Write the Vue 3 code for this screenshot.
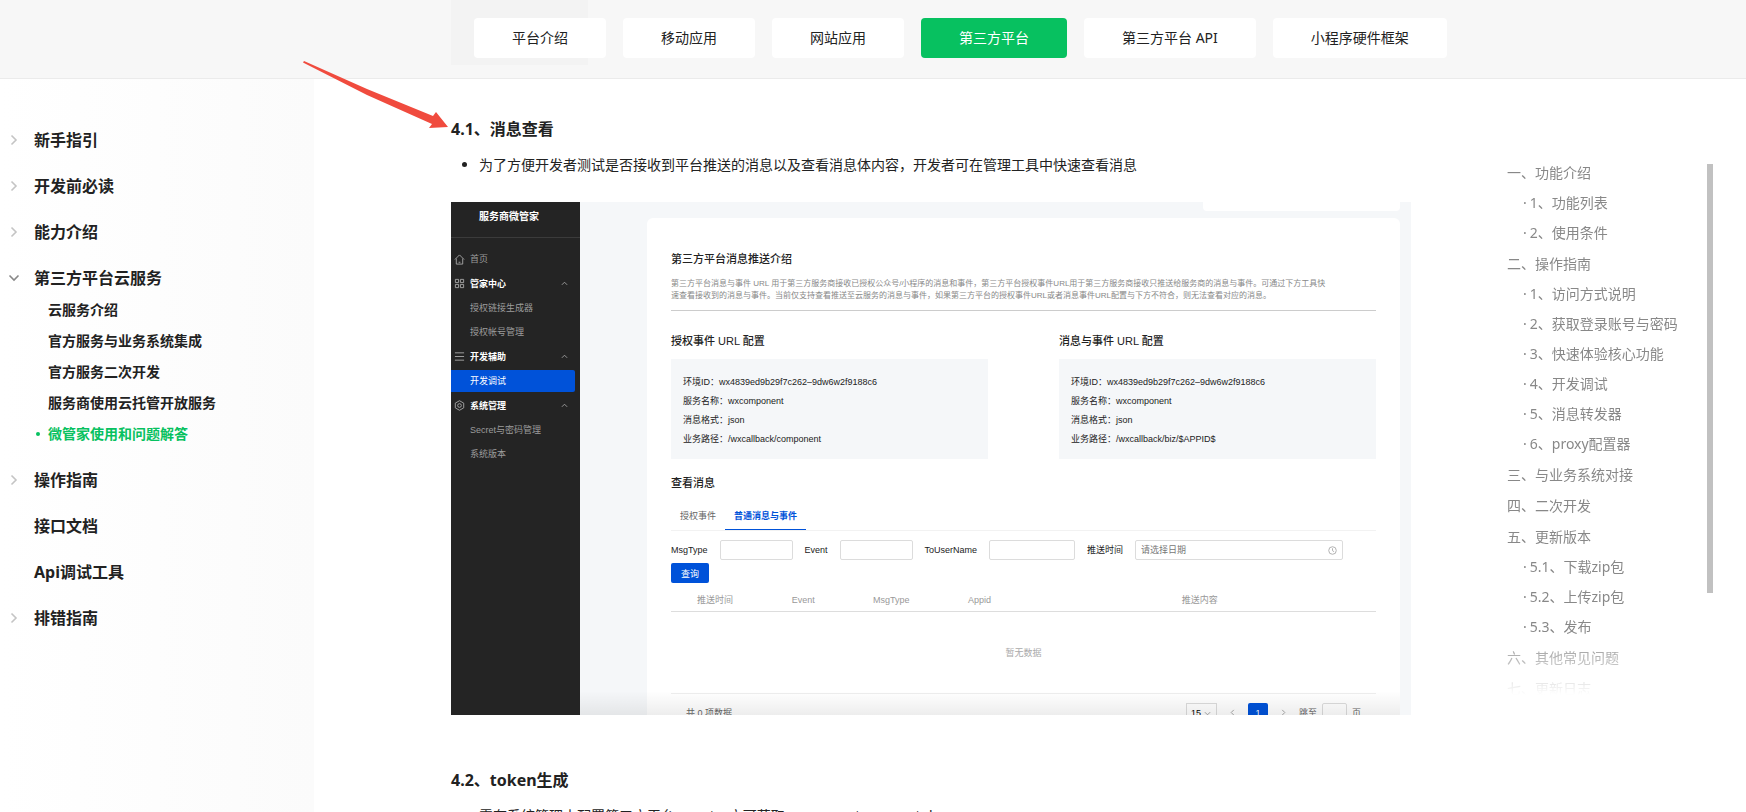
<script setup>
import { ref } from "vue";

const tabs = [
  "平台介绍",
  "移动应用",
  "网站应用",
  "第三方平台",
  "第三方平台 API",
  "小程序硬件框架",
];
const activeTab = ref("第三方平台");

const menu = [
  { title: "新手指引", arrow: true },
  { title: "开发前必读", arrow: true },
  { title: "能力介绍", arrow: true },
  {
    title: "第三方平台云服务",
    arrow: true,
    open: true,
    children: [
      "云服务介绍",
      "官方服务与业务系统集成",
      "官方服务二次开发",
      "服务商使用云托管开放服务",
      "微管家使用和问题解答",
    ],
  },
  { title: "操作指南", arrow: true },
  { title: "接口文档" },
  { title: "Api调试工具" },
  { title: "排错指南", arrow: true },
];
const activeMenu = ref("微管家使用和问题解答");

const toc = [
  { text: "一、功能介绍" },
  { text: "1、功能列表", sub: true },
  { text: "2、使用条件", sub: true },
  { text: "二、操作指南" },
  { text: "1、访问方式说明", sub: true },
  { text: "2、获取登录账号与密码", sub: true },
  { text: "3、快速体验核心功能", sub: true },
  { text: "4、开发调试", sub: true },
  { text: "5、消息转发器", sub: true },
  { text: "6、proxy配置器", sub: true },
  { text: "三、与业务系统对接" },
  { text: "四、二次开发" },
  { text: "五、更新版本" },
  { text: "5.1、下载zip包", sub: true },
  { text: "5.2、上传zip包", sub: true },
  { text: "5.3、发布", sub: true },
  { text: "六、其他常见问题" },
  { text: "七、更新日志" },
];

// admin console shown inside the article
const consoleMenu = [
  { text: "首页", icon: "home" },
  { text: "管家中心", icon: "grid", group: true },
  { text: "授权链接生成器" },
  { text: "授权帐号管理" },
  { text: "开发辅助", icon: "list", group: true },
  { text: "开发调试", active: true },
  { text: "系统管理", icon: "gear", group: true },
  { text: "Secret与密码管理" },
  { text: "系统版本" },
];

const configs = [
  {
    title: "授权事件 URL 配置",
    path: "/wxcallback/component",
  },
  {
    title: "消息与事件 URL 配置",
    path: "/wxcallback/biz/$APPID$",
  },
];

const filters = [
  { id: "msg-type", label: "MsgType" },
  { id: "event", label: "Event" },
  { id: "to-user", label: "ToUserName", wide: true },
];
</script>

<template>
  <div class="page">
    <header class="header">
      <div class="ghost"></div>
      <nav class="tabs">
        <a
          v-for="tab in tabs"
          :key="tab"
          href="#"
          class="tab"
          :class="{ active: tab === activeTab }"
          @click.prevent="activeTab = tab"
          >{{ tab }}</a
        >
      </nav>
    </header>

    <div class="body">
      <aside class="sidebar">
        <ul>
          <li v-for="item in menu" :key="item.title" class="menu-item">
            <a href="#" class="menu-title" @click.prevent>
              <svg
                class="chevron"
                :class="{ open: item.open }"
                viewBox="0 0 12 12"
                width="12"
                height="12"
              >
                <path v-if="item.arrow && !item.open" d="M3.5 1.5L8 6L3.5 10.5" />
                <path v-if="item.open" d="M1.5 3.5L6 8L10.5 3.5" />
              </svg>
              {{ item.title }}
            </a>
            <ul v-if="item.children" class="submenu">
              <li v-for="child in item.children" :key="child">
                <a
                  href="#"
                  :class="{ active: child === activeMenu }"
                  @click.prevent="activeMenu = child"
                  >{{ child }}</a
                >
              </li>
            </ul>
          </li>
        </ul>
      </aside>

      <main class="article">
        <h3>4.1、消息查看</h3>
        <ul class="bullets">
          <li>
            为了方便开发者测试是否接收到平台推送的消息以及查看消息体内容，开发者可在管理工具中快速查看消息
          </li>
        </ul>

        <section class="console">
          <div class="console-side">
            <div class="console-brand">服务商微管家</div>
            <ul>
              <li
                v-for="item in consoleMenu"
                :key="item.text"
                class="console-item"
                :class="{ group: item.group, active: item.active }"
              >
                <svg class="console-icon" viewBox="0 0 12 12" width="11" height="11">
                  <path
                    v-if="item.icon === 'home'"
                    d="M1 6L6 1L11 6M2.5 5V11H9.5V5M5 9H7"
                  />
                  <path
                    v-if="item.icon === 'grid'"
                    d="M1.5 1.5H5V5H1.5ZM7 1.5H10.5V5H7ZM1.5 7H5V10.5H1.5ZM7 7H10.5V10.5H7Z"
                  />
                  <path v-if="item.icon === 'list'" d="M1 2H11M1 6H11M1 10H11" />
                  <g v-if="item.icon === 'gear'">
                    <path d="M6 0.8L10.6 3.4V8.6L6 11.2L1.4 8.6V3.4Z" />
                    <circle cx="6" cy="6" r="2" />
                  </g>
                </svg>
                <span>{{ item.text }}</span>
                <svg
                  v-if="item.group"
                  class="console-caret"
                  viewBox="0 0 8 8"
                  width="7"
                  height="7"
                >
                  <path d="M1 5.5L4 2.5L7 5.5" />
                </svg>
              </li>
            </ul>
          </div>

          <div class="console-main">
            <div class="floating-bar"></div>
            <div class="card">
              <h4>第三方平台消息推送介绍</h4>
              <p class="intro">
                第三方平台消息与事件 URL
                用于第三方服务商接收已授权公众号/小程序的消息和事件，第三方平台授权事件URL用于第三方服务商接收只推送给服务商的消息与事件。可通过下方工具快<br />
                速查看接收到的消息与事件。当前仅支持查看推送至云服务的消息与事件，如果第三方平台的授权事件URL或者消息事件URL配置与下方不符合，则无法查看对应的消息。
              </p>

              <div class="configs">
                <div v-for="config in configs" :key="config.title" class="config">
                  <h4>{{ config.title }}</h4>
                  <div class="config-box">
                    <p>环境ID：wx4839ed9b29f7c262–9dw6w2f9188c6</p>
                    <p>服务名称：wxcomponent</p>
                    <p>消息格式：json</p>
                    <p>业务路径：{{ config.path }}</p>
                  </div>
                </div>
              </div>

              <h4>查看消息</h4>
              <div class="console-tabs">
                <button type="button">授权事件</button>
                <button type="button" class="active">普通消息与事件</button>
              </div>

              <form class="filters" @submit.prevent>
                <div v-for="filter in filters" :key="filter.id" class="field">
                  <label :for="filter.id">{{ filter.label }}</label>
                  <input :id="filter.id" type="text" :class="{ wide: filter.wide }" />
                </div>
                <div class="field">
                  <label for="push-time">推送时间</label>
                  <div class="date">
                    <input id="push-time" type="text" placeholder="请选择日期" />
                    <svg viewBox="0 0 10 10" width="9" height="9">
                      <circle cx="5" cy="5" r="4.2" />
                      <path d="M5 2.5V5.2L6.8 6.4" />
                    </svg>
                  </div>
                </div>
                <button type="submit" class="submit">查询</button>
              </form>

              <table class="result">
                <thead>
                  <tr>
                    <th>推送时间</th>
                    <th>Event</th>
                    <th>MsgType</th>
                    <th>Appid</th>
                    <th class="content">推送内容</th>
                  </tr>
                </thead>
                <tbody>
                  <tr>
                    <td colspan="5">暂无数据</td>
                  </tr>
                </tbody>
              </table>

              <div class="pager">
                <span class="total">共 0 项数据</span>
                <div class="page-size">
                  <select aria-label="每页条数">
                    <option>15</option>
                  </select>
                  <svg viewBox="0 0 8 8" width="7" height="7">
                    <path d="M1 2.5L4 5.5L7 2.5" />
                  </svg>
                </div>
                <button type="button" aria-label="上一页">
                  <svg viewBox="0 0 8 8" width="7" height="7">
                    <path d="M5.5 1L2.5 4L5.5 7" />
                  </svg>
                </button>
                <button type="button" class="current">1</button>
                <button type="button" aria-label="下一页">
                  <svg viewBox="0 0 8 8" width="7" height="7">
                    <path d="M2.5 1L5.5 4L2.5 7" />
                  </svg>
                </button>
                <label class="jump">跳至 <input type="text" /> 页</label>
              </div>
            </div>
          </div>
          <div class="console-fade"></div>
        </section>

        <h3>4.2、token生成</h3>
        <ul class="bullets">
          <li>需在系统管理中配置第三方平台secret，方可获取component_access_token</li>
        </ul>
      </main>

      <aside class="toc">
        <ul>
          <li v-for="item in toc" :key="item.text" :class="{ sub: item.sub }">
            <a href="#" @click.prevent>{{ item.text }}</a>
          </li>
        </ul>
        <div class="toc-scrollbar"></div>
      </aside>
    </div>

    <!-- red pointer to section 4.1 -->
    <svg class="pointer" viewBox="0 0 146 70" width="146" height="70">
      <path
        d="M1 0L64 28L130 55L133 51L145 66L126 67L129 63L64 34L0 1.5Z"
        fill="#f04b3e"
      />
    </svg>
  </div>
</template>

<style>
body {
  margin: 0;
  overflow: hidden;
}
</style>

<style scoped>
.page {
  position: relative;
  height: 100vh;
  overflow: hidden;
  display: flex;
  flex-direction: column;
  background: #fff;
  color: #222;
  font-family: "Noto Sans", "Noto Sans CJK SC", sans-serif;
  font-size: 14px;
  line-height: 22px;
}

ul {
  list-style: none;
  margin: 0;
  padding: 0;
}

a {
  color: inherit;
  text-decoration: none;
}

h3,
h4,
p {
  margin: 0;
}

button,
input,
select {
  font-family: inherit;
  box-sizing: border-box;
}

.header {
  position: relative;
  flex: none;
  box-sizing: border-box;
  height: 79px;
  padding: 18px 0 0 474px;
  background: #f7f7f7;
  border-bottom: 1px solid #ebebeb;
}

.ghost {
  position: absolute;
  left: 451px;
  top: 0;
  width: 137px;
  height: 65px;
  background: #f3f3f3;
}

.tabs {
  position: relative;
  display: flex;
  gap: 17px;
}

.tab {
  padding: 0 38px;
  line-height: 40px;
  border-radius: 4px;
  background: #fff;
  white-space: nowrap;
}

.tab.active {
  background: #07c160;
  color: #fff;
}

.body {
  flex: 1;
  min-height: 0;
  display: flex;
}

/* left menu */
.sidebar {
  flex: none;
  box-sizing: border-box;
  width: 314px;
  padding: 50px 0 0 8px;
  background: linear-gradient(90deg, #fff, #fbfbfb);
}

.menu-item {
  margin-bottom: 24px;
}

.menu-title {
  display: flex;
  align-items: center;
  gap: 14px;
  font-size: 16px;
  font-weight: 700;
}

.chevron path {
  fill: none;
  stroke: #c4c4c4;
  stroke-width: 1.6;
}

.chevron.open path {
  stroke: #888;
}

.submenu {
  display: flex;
  flex-direction: column;
  gap: 9px;
  margin-top: 10px;
  padding-left: 40px;
  font-weight: 700;
}

.submenu a.active {
  color: #07c160;
  position: relative;
}

.submenu a.active::before {
  content: "";
  position: absolute;
  left: -12px;
  top: 8px;
  width: 4px;
  height: 4px;
  border-radius: 50%;
  background: #07c160;
}

/* article */
.article {
  flex: 1;
  min-width: 0;
  padding: 39px 96px 0 137px;
}

.article h3 {
  font-size: 16px;
  font-weight: 700;
}

.bullets {
  margin: 14px 0 26px;
  padding-left: 28px;
  list-style: disc;
}

.console {
  position: relative;
  display: flex;
  height: 513px;
  margin-bottom: 54px;
  overflow: hidden;
  font-family: "Liberation Sans", "Noto Sans CJK SC", sans-serif;
  font-size: 9px;
  line-height: 12px;
}

.console-side {
  flex: none;
  width: 129px;
  background: #242424;
  color: #9c9c9c;
}

.console-brand {
  height: 35px;
  margin-bottom: 10px;
  border-bottom: 1px solid #3b3b3b;
  color: #fff;
  font-size: 10px;
  font-weight: 700;
  line-height: 30px;
  text-align: center;
  padding-right: 13px;
}

.console-item {
  display: flex;
  align-items: center;
  gap: 5px;
  height: 22px;
  margin: 0 5px 2px 0;
  padding: 0 7px 0 3px;
}

.console-item.group {
  height: 23px;
  color: #fff;
  font-weight: 700;
}

.console-item.active {
  border-radius: 0 2px 2px 0;
  background: #0052d9;
  color: #fff;
}

.console-icon path,
.console-icon circle,
.console-caret path {
  fill: none;
  stroke: #a6a6a6;
}

.console-caret {
  margin-left: auto;
}

.console-main {
  flex: 1;
  min-width: 0;
  display: flex;
  flex-direction: column;
  padding: 0 11px 0 67px;
  background: #f5f7f9;
}

.floating-bar {
  flex: none;
  align-self: flex-end;
  width: 197px;
  height: 9px;
  margin-bottom: 7px;
  border-radius: 0 0 4px 4px;
  background: #fff;
}

.card {
  flex: 1;
  padding: 34px 24px 0;
  border-radius: 6px 6px 0 0;
  background: #fff;
}

.card h4 {
  font-size: 11px;
  font-weight: 500;
  line-height: 14px;
}

.intro {
  padding: 12px 0 8px;
  border-bottom: 1px solid #ccc;
  color: #888;
  font-size: 8px;
  white-space: nowrap;
}

.configs {
  display: flex;
  gap: 71px;
  margin: 23px 0 17px;
}

.config {
  flex: 1;
}

.config-box {
  margin-top: 11px;
  padding: 14px 12px 10px;
  background: #f5f7f9;
  line-height: 19px;
}

.console-tabs {
  display: flex;
  margin: 13px 0 9px;
  border-bottom: 1px solid #f2f2f2;
}

.console-tabs button {
  padding: 0 9px;
  border: 0;
  border-bottom: 1px solid transparent;
  background: none;
  color: #666;
  font-size: 9px;
  line-height: 26px;
}

.console-tabs .active {
  border-color: #0052d9;
  color: #0052d9;
  font-weight: 700;
}

.filters {
  display: flex;
  flex-wrap: wrap;
  gap: 3px 12px;
}

.field {
  display: flex;
  align-items: center;
  gap: 12px;
}

.field input {
  width: 73px;
  height: 20px;
  padding: 0 5px;
  border: 1px solid #dcdcdc;
  border-radius: 2px;
  font-size: 9px;
}

.field input.wide {
  width: 86px;
}

.field input::placeholder {
  color: #777;
}

.date {
  position: relative;
  display: flex;
}

.date input {
  width: 208px;
}

.date svg {
  position: absolute;
  right: 6px;
  top: 6px;
  fill: none;
  stroke: #aaa;
}

.submit {
  height: 20px;
  margin-right: auto;
  padding: 0 10px;
  border: 0;
  border-radius: 2px;
  background: #0052d9;
  color: #fff;
  font-size: 9px;
}

.result {
  width: 100%;
  margin-top: 5px;
  table-layout: fixed;
  border-collapse: collapse;
  text-align: center;
}

.result th {
  height: 23px;
  padding: 0;
  border-bottom: 1px solid #ddd;
  color: #999;
  font-weight: 400;
}

.result th.content {
  width: 50%;
}

.result td {
  height: 81px;
  padding: 0;
  border-bottom: 1px solid #eee;
  color: #aaa;
}

.pager {
  display: flex;
  align-items: center;
  gap: 12px;
  padding: 9px 15px 0;
  color: #666;
}

.pager .total {
  margin-right: auto;
}

.page-size {
  position: relative;
}

.page-size select {
  display: block;
  width: 31px;
  height: 20px;
  padding: 0 4px;
  border: 1px solid #dcdcdc;
  background: #fff;
  font-size: 9px;
  appearance: none;
}

.pager svg {
  fill: none;
  stroke: #999;
}

.page-size svg {
  position: absolute;
  right: 6px;
  top: 7px;
}

.pager button {
  height: 20px;
  padding: 0;
  border: 0;
  background: none;
  font-size: 9px;
}

.pager button.current {
  width: 20px;
  border-radius: 2px;
  background: #0052d9;
  color: #fff;
}

.jump {
  display: flex;
  align-items: center;
  gap: 5px;
}

.jump input {
  width: 25px;
  height: 20px;
  border: 1px solid #dcdcdc;
  border-radius: 2px;
}

.console-fade {
  position: absolute;
  left: 129px;
  right: 11px;
  bottom: 0;
  height: 24px;
  background: linear-gradient(rgba(0, 0, 0, 0), rgba(0, 0, 0, 0.07));
  pointer-events: none;
}

/* table of contents */
.toc {
  position: relative;
  flex: none;
  width: 239px;
  height: 532px;
  margin-top: 85px;
  overflow: hidden;
  color: #888;
  line-height: 18px;
}

.toc ul {
  height: 532px;
  mask-image: linear-gradient(#000 470px, transparent 531px);
}

.toc li {
  margin-top: 13px;
}

.toc li:first-child {
  margin-top: 0;
}

.toc li.sub {
  margin-top: 12px;
  padding-left: 16px;
}

.toc li.sub::before {
  content: "·";
  margin-right: 3px;
}

.toc-scrollbar {
  position: absolute;
  right: 33px;
  top: 0;
  width: 6px;
  height: 429px;
  background: #c1c1c1;
}

.pointer {
  position: absolute;
  left: 303px;
  top: 61px;
  pointer-events: none;
}
</style>
